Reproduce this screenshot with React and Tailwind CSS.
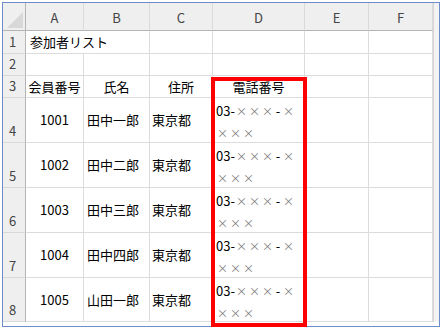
import React from 'react';

const cols = ['A', 'B', 'C', 'D', 'E', 'F'];
const rowHeights = ['23px', '22px', '22px', '45px', '45px', '45px', '45px', '44px'];

const people = [
  ['1001', '田中一郎'],
  ['1002', '田中二郎'],
  ['1003', '田中三郎'],
  ['1004', '田中四郎'],
  ['1005', '山田一郎'],
];

const font = { fontFamily: '"Noto Sans CJK JP", "Noto Sans", sans-serif' };

const Cell = ({ className = '', children }) => (
  <div className={`border-r border-b border-[#dcdcdc] bg-white text-[13px] text-black overflow-visible whitespace-nowrap ${className}`}>
    {children}
  </div>
);

const RowHead = ({ n }) => (
  <div className="flex items-end justify-center pr-[3px] pb-[2px] bg-[#efefef] border-r border-[#b4b4b4] border-b border-b-[#d8d8d8] text-[13px] text-[#444]">
    {n}
  </div>
);

// the "×" placeholders are lighter and smaller than the digits
const X = () => <span className="inline-block w-[13px] text-center text-[11px] text-[#7a7a7a]">×</span>;

const Phone = () => (
  <div className="pl-[3px] pt-[2px] leading-[21px]">
    <div>
      03-<X /><X /><X /><span className="inline-block w-[8px] text-center">-</span><X />
    </div>
    <div>
      <X /><X /><X />
    </div>
  </div>
);

export default function App() {
  return (
    <div className="w-[445px] h-[332px] bg-white pl-[2px] pt-[2px]" style={font}>
      <div className="relative w-[438px] h-[325px] border border-[#6d8ccb] flex">
        <div
          className="grid flex-none"
          style={{
            gridTemplateColumns: '23px 58px 66px 63px 92px 64px 64px',
            gridTemplateRows: ['28px', ...rowHeights].join(' '),
          }}
        >
          {/* corner */}
          <div className="relative bg-[#efefef] border-r border-b border-[#b4b4b4]">
            <svg className="absolute right-[2px] bottom-[2px]" width="16" height="16" viewBox="0 0 16 16">
              <polygon points="16,0 16,16 0,16" fill="#d8d8d8" />
            </svg>
          </div>
          {cols.map((c) => (
            <div
              key={c}
              className="flex items-end justify-center pb-[3px] bg-[#efefef] border-r border-r-[#dadada] border-b border-b-[#b4b4b4] text-[13px] text-[#444]"
            >
              {c}
            </div>
          ))}

          {/* row 1 */}
          <RowHead n="1" />
          <Cell className="relative z-10 flex items-center pl-[4px] border-r-0">参加者リスト</Cell>
          <Cell />
          <Cell />
          <Cell />
          <Cell />
          <Cell />

          {/* row 2 */}
          <RowHead n="2" />
          <Cell />
          <Cell />
          <Cell />
          <Cell />
          <Cell />
          <Cell />

          {/* row 3 */}
          <RowHead n="3" />
          <Cell className="flex items-center justify-center">会員番号</Cell>
          <Cell className="flex items-center justify-center">氏名</Cell>
          <Cell className="flex items-center justify-center">住所</Cell>
          <Cell className="flex items-center justify-center">電話番号</Cell>
          <Cell />
          <Cell />

          {people.map(([id, name], i) => (
            <React.Fragment key={id}>
              <RowHead n={String(i + 4)} />
              <Cell className="flex items-center justify-center">{id}</Cell>
              <Cell className="flex items-center pl-[3px]">{name}</Cell>
              <Cell className="flex items-center pl-[2px]">東京都</Cell>
              <Cell>
                <Phone />
              </Cell>
              <Cell />
              <Cell />
            </React.Fragment>
          ))}
        </div>

        {/* right edge strip */}
        <div className="flex-1 bg-[#f3f3f3] border-l border-[#d6d6d6] h-[319px]" />

        {/* red highlight around D3:D8 */}
        <div className="absolute left-[208px] top-[74px] w-[96px] h-[250px] border-4 border-[#ff0000] pointer-events-none" />
      </div>
    </div>
  );
}
